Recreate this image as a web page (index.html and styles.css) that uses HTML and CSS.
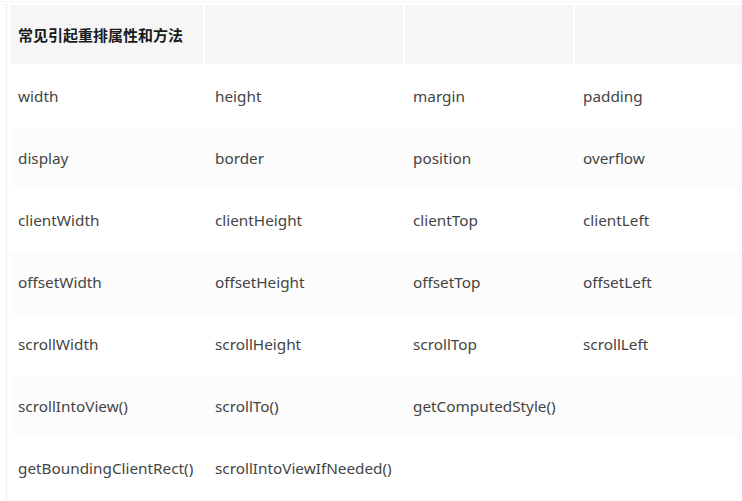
FILE: index.html
```html
<!DOCTYPE html>
<html lang="zh">
<head>
<meta charset="utf-8">
<title>常见引起重排属性和方法</title>
<link rel="stylesheet" href="styles.css">
</head>
<body>
<div class="topline"></div>
<div class="wrap">
<table class="reflow">
<colgroup>
<col class="c1"><col class="c2"><col class="c3"><col class="c4">
</colgroup>
<thead>
<tr><th>常见引起重排属性和方法</th><th></th><th></th><th></th></tr>
</thead>
<tbody>
<tr><td>width</td><td>height</td><td>margin</td><td>padding</td></tr>
<tr><td>display</td><td>border</td><td>position</td><td>overflow</td></tr>
<tr><td>clientWidth</td><td>clientHeight</td><td>clientTop</td><td>clientLeft</td></tr>
<tr><td>offsetWidth</td><td>offsetHeight</td><td>offsetTop</td><td>offsetLeft</td></tr>
<tr><td>scrollWidth</td><td>scrollHeight</td><td>scrollTop</td><td>scrollLeft</td></tr>
<tr><td>scrollIntoView()</td><td>scrollTo()</td><td>getComputedStyle()</td><td></td></tr>
<tr><td>getBoundingClientRect()</td><td>scrollIntoViewIfNeeded()</td><td></td><td></td></tr>
</tbody>
</table>
</div>
</body>
</html>
```
FILE: styles.css
```css
html, body {
  margin: 0;
  padding: 0;
  background: #fff;
  overflow: hidden;
}
body {
  width: 742px;
  height: 501px;
  font-family: "Noto Sans", "Noto Sans CJK SC", sans-serif;
  font-size: 15.3px;
  color: #444444;
}
.topline {
  height: 1px;
  margin-top: 1px;
  background: #f4f4f4;
}
.wrap {
  margin-left: 6px;
  margin-top: 1px;
  border-left: 1px solid #eeeeee;
  width: 760px;
  padding-top: 2px;
}
.reflow {
  border-collapse: separate;
  border-spacing: 0;
  table-layout: fixed;
  width: 743px;
  margin-left: 3px;
}
.c1 { width: 195px; }
.c2 { width: 200px; }
.c3 { width: 170px; }
.c4 { width: 178px; }
.reflow th {
  height: 59px;
  padding: 0 8px;
  background: #f6f6f6;
  border-right: 2px solid #fff;
  border-bottom: 2px solid #fff;
  text-align: left;
  font-family: "Noto Sans CJK SC", sans-serif;
  font-weight: 700;
  font-size: 15px;
  color: #1a1a1a;
  white-space: nowrap;
}
.reflow td {
  height: 60px;
  padding: 0 8px 2px;
  white-space: nowrap;
  vertical-align: middle;
}
.reflow td:nth-child(2) {
  padding-left: 10px;
}
.reflow tbody tr:nth-child(even) td {
  background: #fcfcfc;
}
```
